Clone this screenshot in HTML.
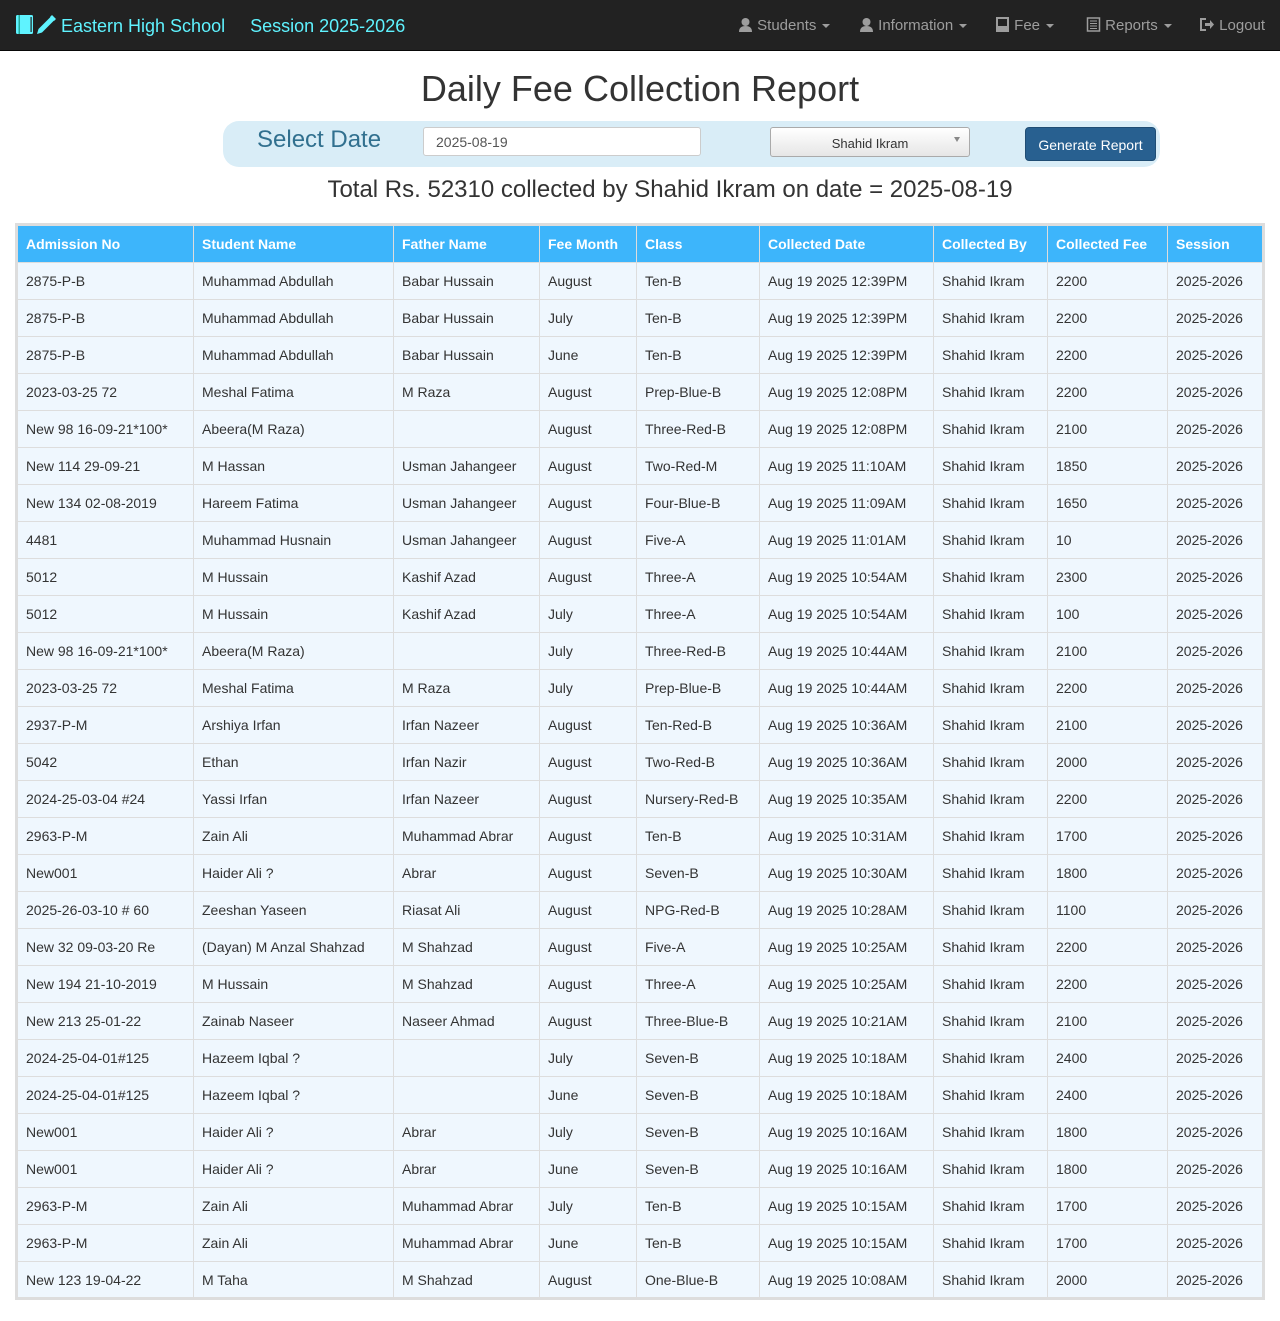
<!DOCTYPE html>
<html><head><meta charset="utf-8"><style>
*{box-sizing:border-box;margin:0;padding:0}
body{width:1280px;height:1321px;background:#fff;font-family:"Liberation Sans",sans-serif;color:#333;position:relative;overflow:hidden}
.nav{position:absolute;left:0;top:0;width:1280px;height:51px;background:#222;border-bottom:1px solid #080808}
.brand{position:absolute;left:16px;top:15px;color:#5ff3ff;font-size:18px;white-space:nowrap}
.brand span.s{margin-left:25px}
.menu{position:absolute;top:17px;color:#9d9d9d;font-size:15px;white-space:nowrap}
.car{display:inline-block;border-top:4px solid #9d9d9d;border-left:4px solid transparent;border-right:4px solid transparent;vertical-align:middle;margin-left:6px}
h1{position:absolute;top:68px;left:0;width:1280px;text-align:center;font-weight:normal;font-size:36px;color:#333}
.panel{position:absolute;left:223px;top:121px;width:937px;height:46px;background:#d9edf7;border-radius:16px}
.sd{position:absolute;left:34px;top:5px;font-size:24px;color:#31708f}
.inp{position:absolute;left:200px;top:6px;width:278px;height:29px;background:#fff;border:1px solid #ccc;border-radius:3px;font-size:14px;padding:6px 12px;color:#555}
.sel{position:absolute;left:547px;top:6px;width:200px;height:30px;background:linear-gradient(#fff,#e6e6e6);border:1px solid #aaa;border-radius:3px;font-size:13px;text-align:center;padding-top:8px;color:#333}
.sel:after{content:"";position:absolute;right:9px;top:9px;border-top:5px solid #888;border-left:3px solid transparent;border-right:3px solid transparent}
.btn{position:absolute;left:802px;top:6px;width:131px;height:34px;background:#286090;border:1px solid #204d74;border-radius:4px;color:#fff;font-size:14px;text-align:center;padding-top:9px}
.tot{position:absolute;top:176px;left:0;width:1280px;text-align:center;font-size:24px;color:#333;padding-left:60px}
table{position:absolute;left:15px;top:223px;border-collapse:collapse;border:3px solid #ddd;width:1250px;table-layout:fixed;font-size:14px}
th,td{border:1px solid #ddd;padding:0 8px;text-align:left;white-space:nowrap;overflow:hidden}
th{background:#3db5fb;color:#fff;height:38px;font-weight:bold}
td{background:#eff7fe;height:37px;color:#333}
</style></head><body>
<div class="nav">
<div class="brand"><svg width="45" height="20" viewBox="0 0 45 20" style="vertical-align:-3px"><rect x="0" y="0" width="17" height="19" rx="1.5" fill="#5ff3ff"/><rect x="2.5" y="0" width="1.5" height="19" fill="#2a9"/><rect x="14.5" y="2" width="1.2" height="15" fill="#222"/><path d="M21 19l1.5-5 12-12 3.5 3.5-12 12z" fill="#5ff3ff"/><path d="M36 0l4 4-2 2-4-4z" fill="#5ff3ff"/></svg>Eastern High School<span class="s">Session 2025-2026</span></div>
<div class="menu" style="left:738px"><svg width="15" height="15" viewBox="0 0 15 15" style="vertical-align:-2px"><circle cx="7.5" cy="5" r="4" fill="#9d9d9d"/><path d="M1 15q0-6 6.5-6t6.5 6z" fill="#9d9d9d"/></svg> Students<span class="car"></span></div>
<div class="menu" style="left:859px"><svg width="15" height="15" viewBox="0 0 15 15" style="vertical-align:-2px"><circle cx="7.5" cy="5" r="4" fill="#9d9d9d"/><path d="M1 15q0-6 6.5-6t6.5 6z" fill="#9d9d9d"/></svg> Information<span class="car"></span></div>
<div class="menu" style="left:995px"><svg width="15" height="15" viewBox="0 0 15 15" style="vertical-align:-2px"><path d="M2 1h11v13H2z" fill="none" stroke="#9d9d9d" stroke-width="2"/><rect x="2" y="9" width="11" height="5" fill="#9d9d9d"/></svg> Fee<span class="car"></span></div>
<div class="menu" style="left:1086px"><svg width="15" height="15" viewBox="0 0 15 15" style="vertical-align:-2px"><rect x="1.5" y="1" width="12" height="13" fill="none" stroke="#9d9d9d" stroke-width="1.5"/><path d="M4 4h7M4 6.5h7M4 9h7M4 11.5h7" stroke="#9d9d9d"/></svg> Reports<span class="car"></span></div>
<div class="menu" style="left:1199px"><svg width="16" height="15" viewBox="0 0 16 15" style="vertical-align:-2px"><path d="M7 2H2v11h5" fill="none" stroke="#9d9d9d" stroke-width="2"/><path d="M6 6h5V3l4 4.5-4 4.5V9H6z" fill="#9d9d9d"/></svg> Logout</div>
</div>
<h1>Daily Fee Collection Report</h1>
<div class="panel"><div class="sd">Select Date</div><div class="inp">2025-08-19</div><div class="sel">Shahid Ikram</div><div class="btn">Generate Report</div></div>
<div class="tot">Total Rs. 52310 collected by Shahid Ikram on date = 2025-08-19</div>
<table>
<colgroup><col style="width:177px"><col style="width:200px"><col style="width:146px"><col style="width:97px"><col style="width:123px"><col style="width:174px"><col style="width:114px"><col style="width:120px"><col></colgroup>
<tr><th>Admission No</th><th>Student Name</th><th>Father Name</th><th>Fee Month</th><th>Class</th><th>Collected Date</th><th>Collected By</th><th>Collected Fee</th><th>Session</th></tr>
<tr><td>2875-P-B</td><td>Muhammad Abdullah</td><td>Babar Hussain</td><td>August</td><td>Ten-B</td><td>Aug 19 2025 12:39PM</td><td>Shahid Ikram</td><td>2200</td><td>2025-2026</td></tr>
<tr><td>2875-P-B</td><td>Muhammad Abdullah</td><td>Babar Hussain</td><td>July</td><td>Ten-B</td><td>Aug 19 2025 12:39PM</td><td>Shahid Ikram</td><td>2200</td><td>2025-2026</td></tr>
<tr><td>2875-P-B</td><td>Muhammad Abdullah</td><td>Babar Hussain</td><td>June</td><td>Ten-B</td><td>Aug 19 2025 12:39PM</td><td>Shahid Ikram</td><td>2200</td><td>2025-2026</td></tr>
<tr><td>2023-03-25 72</td><td>Meshal Fatima</td><td>M Raza</td><td>August</td><td>Prep-Blue-B</td><td>Aug 19 2025 12:08PM</td><td>Shahid Ikram</td><td>2200</td><td>2025-2026</td></tr>
<tr><td>New 98 16-09-21*100*</td><td>Abeera(M Raza)</td><td></td><td>August</td><td>Three-Red-B</td><td>Aug 19 2025 12:08PM</td><td>Shahid Ikram</td><td>2100</td><td>2025-2026</td></tr>
<tr><td>New 114 29-09-21</td><td>M Hassan</td><td>Usman Jahangeer</td><td>August</td><td>Two-Red-M</td><td>Aug 19 2025 11:10AM</td><td>Shahid Ikram</td><td>1850</td><td>2025-2026</td></tr>
<tr><td>New 134 02-08-2019</td><td>Hareem Fatima</td><td>Usman Jahangeer</td><td>August</td><td>Four-Blue-B</td><td>Aug 19 2025 11:09AM</td><td>Shahid Ikram</td><td>1650</td><td>2025-2026</td></tr>
<tr><td>4481</td><td>Muhammad Husnain</td><td>Usman Jahangeer</td><td>August</td><td>Five-A</td><td>Aug 19 2025 11:01AM</td><td>Shahid Ikram</td><td>10</td><td>2025-2026</td></tr>
<tr><td>5012</td><td>M Hussain</td><td>Kashif Azad</td><td>August</td><td>Three-A</td><td>Aug 19 2025 10:54AM</td><td>Shahid Ikram</td><td>2300</td><td>2025-2026</td></tr>
<tr><td>5012</td><td>M Hussain</td><td>Kashif Azad</td><td>July</td><td>Three-A</td><td>Aug 19 2025 10:54AM</td><td>Shahid Ikram</td><td>100</td><td>2025-2026</td></tr>
<tr><td>New 98 16-09-21*100*</td><td>Abeera(M Raza)</td><td></td><td>July</td><td>Three-Red-B</td><td>Aug 19 2025 10:44AM</td><td>Shahid Ikram</td><td>2100</td><td>2025-2026</td></tr>
<tr><td>2023-03-25 72</td><td>Meshal Fatima</td><td>M Raza</td><td>July</td><td>Prep-Blue-B</td><td>Aug 19 2025 10:44AM</td><td>Shahid Ikram</td><td>2200</td><td>2025-2026</td></tr>
<tr><td>2937-P-M</td><td>Arshiya Irfan</td><td>Irfan Nazeer</td><td>August</td><td>Ten-Red-B</td><td>Aug 19 2025 10:36AM</td><td>Shahid Ikram</td><td>2100</td><td>2025-2026</td></tr>
<tr><td>5042</td><td>Ethan</td><td>Irfan Nazir</td><td>August</td><td>Two-Red-B</td><td>Aug 19 2025 10:36AM</td><td>Shahid Ikram</td><td>2000</td><td>2025-2026</td></tr>
<tr><td>2024-25-03-04 #24</td><td>Yassi Irfan</td><td>Irfan Nazeer</td><td>August</td><td>Nursery-Red-B</td><td>Aug 19 2025 10:35AM</td><td>Shahid Ikram</td><td>2200</td><td>2025-2026</td></tr>
<tr><td>2963-P-M</td><td>Zain Ali</td><td>Muhammad Abrar</td><td>August</td><td>Ten-B</td><td>Aug 19 2025 10:31AM</td><td>Shahid Ikram</td><td>1700</td><td>2025-2026</td></tr>
<tr><td>New001</td><td>Haider Ali ?</td><td>Abrar</td><td>August</td><td>Seven-B</td><td>Aug 19 2025 10:30AM</td><td>Shahid Ikram</td><td>1800</td><td>2025-2026</td></tr>
<tr><td>2025-26-03-10 # 60</td><td>Zeeshan Yaseen</td><td>Riasat Ali</td><td>August</td><td>NPG-Red-B</td><td>Aug 19 2025 10:28AM</td><td>Shahid Ikram</td><td>1100</td><td>2025-2026</td></tr>
<tr><td>New 32 09-03-20 Re</td><td>(Dayan) M Anzal Shahzad</td><td>M Shahzad</td><td>August</td><td>Five-A</td><td>Aug 19 2025 10:25AM</td><td>Shahid Ikram</td><td>2200</td><td>2025-2026</td></tr>
<tr><td>New 194 21-10-2019</td><td>M Hussain</td><td>M Shahzad</td><td>August</td><td>Three-A</td><td>Aug 19 2025 10:25AM</td><td>Shahid Ikram</td><td>2200</td><td>2025-2026</td></tr>
<tr><td>New 213 25-01-22</td><td>Zainab Naseer</td><td>Naseer Ahmad</td><td>August</td><td>Three-Blue-B</td><td>Aug 19 2025 10:21AM</td><td>Shahid Ikram</td><td>2100</td><td>2025-2026</td></tr>
<tr><td>2024-25-04-01#125</td><td>Hazeem Iqbal ?</td><td></td><td>July</td><td>Seven-B</td><td>Aug 19 2025 10:18AM</td><td>Shahid Ikram</td><td>2400</td><td>2025-2026</td></tr>
<tr><td>2024-25-04-01#125</td><td>Hazeem Iqbal ?</td><td></td><td>June</td><td>Seven-B</td><td>Aug 19 2025 10:18AM</td><td>Shahid Ikram</td><td>2400</td><td>2025-2026</td></tr>
<tr><td>New001</td><td>Haider Ali ?</td><td>Abrar</td><td>July</td><td>Seven-B</td><td>Aug 19 2025 10:16AM</td><td>Shahid Ikram</td><td>1800</td><td>2025-2026</td></tr>
<tr><td>New001</td><td>Haider Ali ?</td><td>Abrar</td><td>June</td><td>Seven-B</td><td>Aug 19 2025 10:16AM</td><td>Shahid Ikram</td><td>1800</td><td>2025-2026</td></tr>
<tr><td>2963-P-M</td><td>Zain Ali</td><td>Muhammad Abrar</td><td>July</td><td>Ten-B</td><td>Aug 19 2025 10:15AM</td><td>Shahid Ikram</td><td>1700</td><td>2025-2026</td></tr>
<tr><td>2963-P-M</td><td>Zain Ali</td><td>Muhammad Abrar</td><td>June</td><td>Ten-B</td><td>Aug 19 2025 10:15AM</td><td>Shahid Ikram</td><td>1700</td><td>2025-2026</td></tr>
<tr><td>New 123 19-04-22</td><td>M Taha</td><td>M Shahzad</td><td>August</td><td>One-Blue-B</td><td>Aug 19 2025 10:08AM</td><td>Shahid Ikram</td><td>2000</td><td>2025-2026</td></tr>
</table>
</body></html>
